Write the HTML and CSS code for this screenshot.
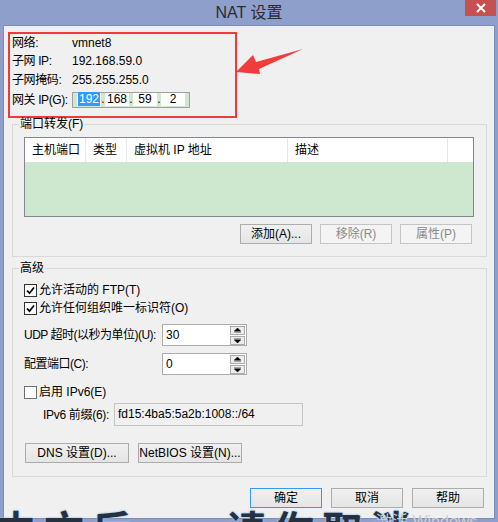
FILE: index.html
```html
<!DOCTYPE html>
<html lang="zh-CN">
<head>
    <meta charset="UTF-8">
    <title>NAT 设置</title>
    <link rel="stylesheet" href="styles.css">
</head>
<body>
    <div class="window">
        <div class="titlebar">
            NAT 设置
            <span class="close">
                <svg width="12" height="10" viewBox="0 0 12 10"><path d="M2 1 L10 9 M10 1 L2 9" stroke="#fff" stroke-width="2"/></svg>
            </span>
        </div>
        <div class="client">
            <div class="info">
                <div class="row"><span class="key">网络:</span><span>vmnet8</span></div>
                <div class="row"><span class="key">子网 IP:</span><span>192.168.59.0</span></div>
                <div class="row row3"><span class="key">子网掩码:</span><span>255.255.255.0</span></div>
                <div class="row row4">
                    <span class="key">网关 IP(G):</span>
                    <div class="ipbox">
                        <span class="seg"><span class="sel">192</span></span><span class="dot">.</span>
                        <span class="seg">168</span><span class="dot">.</span>
                        <span class="seg">59</span><span class="dot">.</span>
                        <span class="seg">2</span>
                    </div>
                </div>
            </div>

            <fieldset class="group ports">
                <legend>端口转发(F)</legend>
                <div class="inner">
                    <div class="listview">
                        <div class="lv-head">
                            <span class="c1">主机端口</span>
                            <span class="c2">类型</span>
                            <span class="c3">虚拟机 IP 地址</span>
                            <span class="c4">描述</span>
                            <span class="c5"></span>
                        </div>
                        <div class="lv-body"></div>
                    </div>
                    <div class="btnrow">
                        <button class="btn">添加(A)...</button>
                        <button class="btn" disabled>移除(R)</button>
                        <button class="btn" disabled>属性(P)</button>
                    </div>
                </div>
            </fieldset>

            <fieldset class="group adv">
                <legend>高级</legend>
                <div class="inner">
                    <label class="check first"><span class="box on"><svg width="9" height="9" viewBox="0 0 9 9"><path d="M1 4.5 L3.5 7.2 L8 1.5" fill="none" stroke="#000" stroke-width="1.8"/></svg></span>允许活动的 FTP(T)</label>
                    <label class="check"><span class="box on"><svg width="9" height="9" viewBox="0 0 9 9"><path d="M1 4.5 L3.5 7.2 L8 1.5" fill="none" stroke="#000" stroke-width="1.8"/></svg></span>允许任何组织唯一标识符(O)</label>

                    <div class="field spinrow">
                        <span class="flabel">UDP 超时(以秒为单位)(U):</span>
                        <div class="spin">
                            <span class="val">30</span>
                            <span class="arrows">
                                <span class="sbtn"><svg width="7" height="5" viewBox="0 0 7 5"><path d="M0.5 3 L3.5 0 L6.5 3 Z M0 4 H7" fill="#000" stroke="#000" stroke-width="0.6"/></svg></span>
                                <span class="sbtn"><svg width="7" height="5" viewBox="0 0 7 5"><path d="M0 1 H7 M0.5 2 L3.5 5 L6.5 2 Z" fill="#000" stroke="#000" stroke-width="0.6"/></svg></span>
                            </span>
                        </div>
                    </div>
                    <div class="field spinrow">
                        <span class="flabel">配置端口(C):</span>
                        <div class="spin">
                            <span class="val">0</span>
                            <span class="arrows">
                                <span class="sbtn"><svg width="7" height="5" viewBox="0 0 7 5"><path d="M0.5 3 L3.5 0 L6.5 3 Z M0 4 H7" fill="#000" stroke="#000" stroke-width="0.6"/></svg></span>
                                <span class="sbtn"><svg width="7" height="5" viewBox="0 0 7 5"><path d="M0 1 H7 M0.5 2 L3.5 5 L6.5 2 Z" fill="#000" stroke="#000" stroke-width="0.6"/></svg></span>
                            </span>
                        </div>
                    </div>

                    <label class="check ipv6"><span class="box"></span>启用 IPv6(E)</label>
                    <div class="field prefix">
                        <span class="plabel">IPv6 前缀(6):</span>
                        <div class="textbox">fd15:4ba5:5a2b:1008::/64</div>
                    </div>

                    <div class="advbtns">
                        <button class="btn wide">DNS 设置(D)...</button>
                        <button class="btn wide">NetBIOS 设置(N)...</button>
                    </div>
                </div>
            </fieldset>

            <div class="dlgbtns">
                <button class="btn focus">确定</button>
                <button class="btn">取消</button>
                <button class="btn">帮助</button>
            </div>
        </div>

        <svg class="arrow" width="498" height="522" viewBox="0 0 498 522">
            <polygon points="236,72 253,55 256,62 303,49 259,69 260,74" fill="#f23b3b"/>
        </svg>
        <div class="watermark">中文后 — 请你取消</div>
        <div class="activate">激活 Windows</div>
    </div>
</body>
</html>
```

FILE: styles.css
```css
body {
    margin: 0;
    font-family: "Liberation Sans", "Noto Sans CJK SC", sans-serif;
    font-size: 12px;
    color: #000;
}
.window {
    position: relative;
    width: 498px;
    height: 522px;
    background: #8f9fcc;
    overflow: hidden;
    white-space: nowrap;
}
.titlebar {
    position: relative;
    height: 25px;
    line-height: 25px;
    text-align: center;
    font-size: 16px;
    color: #2c2c2c;
}
.close {
    position: absolute;
    top: 0;
    right: 2px;
    width: 31px;
    height: 16px;
    background: #c75050;
    display: flex;
    align-items: center;
    justify-content: center;
}
.client {
    margin: 0 3px;
    height: 494px;
    box-sizing: border-box;
    border: 1px solid #7b8cbd;
    background: #f0f0f0;
}

/* red box */
.info {
    margin: 6px 0 0 4px;
    width: 229px;
    height: 86px;
    box-sizing: border-box;
    border: 2px solid #ee3a3a;
    padding-left: 2px;
}
.row {
    display: flex;
    align-items: center;
    height: 18px;
    line-height: 14px;
}
.row3 {
    height: 19px;
}
.row4 {
    height: 21px;
}
.key {
    width: 60px;
    flex-shrink: 0;
    letter-spacing: -0.4px;
}
.ipbox {
    width: 118px;
    height: 16px;
    box-sizing: border-box;
    border: 1px solid #a0a0a0;
    background: #cfe8cf;
    display: flex;
    align-items: center;
    padding-left: 4px;
}
.seg {
    width: 24px;
    height: 13px;
    background: #fff;
    text-align: center;
    line-height: 13px;
}
.sel {
    background: #3399ff;
    color: #fff;
    padding: 0 1px;
}
.dot {
    width: 4px;
    text-align: center;
    line-height: 13px;
}

/* group boxes */
.group {
    margin: 0 7px 0 8px;
    padding: 0;
    border: 1px solid #d9d9d9;
    min-width: 0;
}
.group legend {
    margin-left: 6px;
    padding: 0 1px;
    line-height: 12px;
}
.ports .inner {
    padding: 7px 12px 12px 11px;
}
.listview {
    height: 80px;
    box-sizing: border-box;
    border: 1px solid #828790;
    display: flex;
    flex-direction: column;
}
.lv-head {
    height: 24px;
    display: flex;
    background: #fff;
    line-height: 24px;
}
.lv-head span {
    box-sizing: border-box;
    border-right: 1px solid #e5eaf0;
    padding-left: 7px;
}
.c1 { width: 61px; }
.c2 { width: 41px; }
.c3 { width: 161px; }
.c4 { width: 160px; }
.c5 { flex: 1; border-right: none !important; }
.lv-body {
    flex: 1;
    background: #cde8cf;
}
.btnrow {
    margin-top: 7px;
    padding-right: 2px;
    display: flex;
    justify-content: flex-end;
    gap: 8px;
}

.btn {
    width: 72px;
    height: 20px;
    box-sizing: border-box;
    border: 1px solid #acacac;
    background: linear-gradient(#f0f0f0, #e5e5e5);
    font-family: inherit;
    font-size: 12px;
    color: #000;
    padding: 0;
    line-height: 18px;
    white-space: nowrap;
}
.btn:disabled {
    border-color: #c5c5c5;
    background: #f4f4f4;
    color: #8a8a8a;
}
.btn.focus {
    border-color: #3399ff;
}
.btn.wide {
    width: 104px;
}

.adv {
    margin-top: 5px;
}
.adv .inner {
    padding: 7px 12px 13px 11px;
}
.check {
    display: flex;
    align-items: center;
    gap: 2px;
    height: 18px;
    line-height: 14px;
}
.box {
    width: 13px;
    height: 13px;
    box-sizing: border-box;
    border: 1px solid #707070;
    background: #fff;
    display: flex;
    align-items: center;
    justify-content: center;
}
.box.on {
    border-color: #333;
}
.field {
    display: flex;
    align-items: center;
}
.spinrow {
    margin-top: 7px;
}
.flabel {
    width: 138px;
    flex-shrink: 0;
    line-height: 14px;
    letter-spacing: -0.5px;
}
.spin {
    width: 85px;
    height: 22px;
    box-sizing: border-box;
    border: 1px solid #acacac;
    background: #fff;
    display: flex;
    justify-content: space-between;
}
.val {
    padding: 2px 0 0 3px;
    line-height: 16px;
}
.arrows {
    display: flex;
    flex-direction: column;
    gap: 1px;
    padding: 1px 1px 0 0;
}
.sbtn {
    width: 15px;
    height: 9px;
    box-sizing: border-box;
    border: 1px solid #acacac;
    background: #ececec;
    display: flex;
    align-items: center;
    justify-content: center;
}
.ipv6 {
    margin-top: 8px;
}
.prefix {
    margin-top: 2px;
}
.plabel {
    width: 71px;
    padding-left: 19px;
    flex-shrink: 0;
    line-height: 14px;
    letter-spacing: -0.3px;
}
.textbox {
    width: 189px;
    height: 23px;
    box-sizing: border-box;
    border: 1px solid #c4c4c4;
    background: #f0f0f0;
    padding: 2px 0 0 3px;
    line-height: 16px;
}
.advbtns {
    margin-top: 17px;
    display: flex;
    gap: 9px;
    padding-left: 1px;
}
.dlgbtns {
    margin-top: 11px;
    padding-right: 10px;
    display: flex;
    justify-content: flex-end;
    gap: 9px;
}

/* overlays */
.arrow {
    position: absolute;
    top: 0;
    left: 0;
    pointer-events: none;
}
.watermark {
    position: absolute;
    left: -4px;
    top: 507px;
    font-size: 40px;
    font-weight: bold;
    line-height: 48px;
    letter-spacing: 8px;
    color: #26303e;
    text-shadow: 0 0 2px #9cc9ee, 0 0 2px #9cc9ee;
}
.activate {
    position: absolute;
    left: 376px;
    top: 512px;
    font-size: 16px;
    line-height: 20px;
    color: #cfcfcf;
}
```
